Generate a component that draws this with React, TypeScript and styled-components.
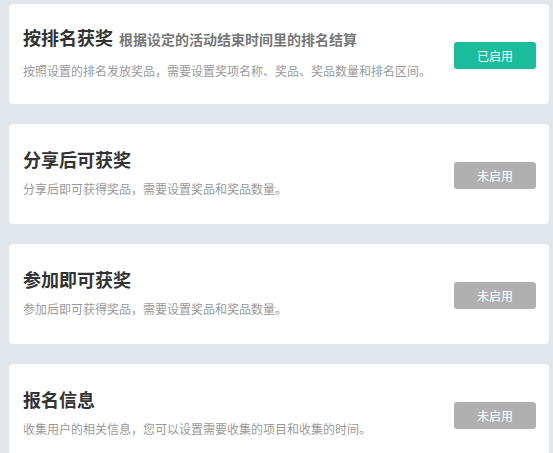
import React from "react";
import styled, { createGlobalStyle } from "styled-components";

type Rule = {
  title: string;
  note?: string;
  description: string;
  enabled: boolean;
};

const rules: Rule[] = [
  {
    title: "按排名获奖",
    note: "根据设定的活动结束时间里的排名结算",
    description: "按照设置的排名发放奖品，需要设置奖项名称、奖品、奖品数量和排名区间。",
    enabled: true,
  },
  {
    title: "分享后可获奖",
    description: "分享后即可获得奖品，需要设置奖品和奖品数量。",
    enabled: false,
  },
  {
    title: "参加即可获奖",
    description: "参加后即可获得奖品，需要设置奖品和奖品数量。",
    enabled: false,
  },
  {
    title: "报名信息",
    description: "收集用户的相关信息，您可以设置需要收集的项目和收集的时间。",
    enabled: false,
  },
];

const GlobalStyle = createGlobalStyle`
  html, body {
    margin: 0;
    padding: 0;
    background: #e1e6ea;
    font-family: "Noto Sans CJK SC", "Noto Sans", sans-serif;
  }
`;

const Page = styled.div`
  display: flex;
  flex-direction: column;
  gap: 20px;
  padding: 4px 4px 0 9px;
  height: 453px;
  overflow: hidden;
  box-sizing: border-box;
`;

const Card = styled.div`
  flex: 0 0 auto;
  display: flex;
  align-items: center;
  justify-content: space-between;
  height: 100px;
  padding: 0 13px 0 14px;
  box-sizing: border-box;
  background: #fff;
  border-radius: 4px;
`;

const Info = styled.div`
  display: flex;
  flex-direction: column;
  margin-bottom: 3px;
`;

const TitleRow = styled.div<{ $wide: boolean }>`
  display: flex;
  align-items: baseline;
  gap: 6px;
  margin-bottom: ${(p) => (p.$wide ? "11px" : "9px")};
  line-height: 24px;
`;

const Title = styled.h3`
  margin: 0;
  font-size: 18px;
  font-weight: 700;
  color: #333;
`;

const Note = styled.span`
  font-size: 14px;
  font-weight: 700;
  color: #777;
`;

const Description = styled.p`
  margin: 0;
  font-size: 12px;
  line-height: 18px;
  color: #999;
`;

const StatusButton = styled.button<{ $on: boolean }>`
  width: 82px;
  height: 27px;
  margin-top: 2px;
  border: none;
  border-radius: 3px;
  background: ${(p) => (p.$on ? "#1bbc9b" : "#b0b0b0")};
  color: #fff;
  font-family: inherit;
  font-size: 12px;
  cursor: pointer;
`;

export default function App() {
  return (
    <>
      <GlobalStyle />
      <Page>
        {rules.map((rule) => (
          <Card key={rule.title}>
            <Info>
              <TitleRow $wide={Boolean(rule.note)}>
                <Title>{rule.title}</Title>
                {rule.note && <Note>{rule.note}</Note>}
              </TitleRow>
              <Description>{rule.description}</Description>
            </Info>
            <StatusButton $on={rule.enabled}>{rule.enabled ? "已启用" : "未启用"}</StatusButton>
          </Card>
        ))}
      </Page>
    </>
  );
}
